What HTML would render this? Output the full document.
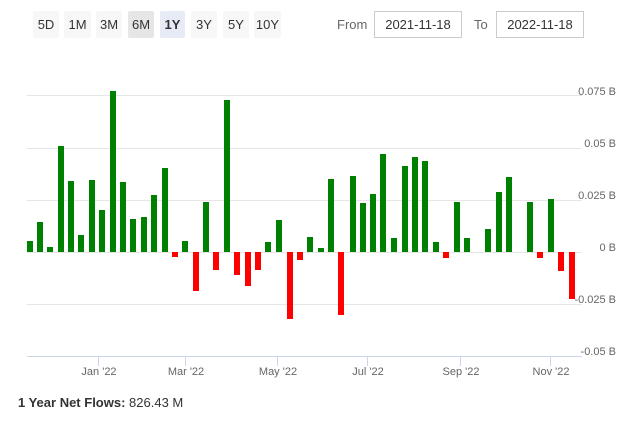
<!DOCTYPE html>
<html><head><style>
body{margin:0;width:640px;height:428px;background:#fff;font-family:"Liberation Sans",sans-serif;position:relative;overflow:hidden}
.b{position:absolute;top:11px;height:27px;background:#f7f7f7;color:#333;font-size:13px;line-height:27px;text-align:center;border-radius:2px}
.t{position:absolute;top:11px;font-size:13px;color:#666;line-height:27px}
.i{position:absolute;top:11px;height:25px;border:1px solid #ccc;font-size:13px;color:#333;line-height:25px;text-align:center}
.ft{position:absolute;left:18px;top:395px;font-size:13px;color:#333}
</style></head><body>
<div class="b" style="left:33px;width:26px">5D</div>
<div class="b" style="left:64px;width:27px">1M</div>
<div class="b" style="left:96px;width:26px">3M</div>
<div class="b" style="left:128px;width:26px;background:#e6e6e6">6M</div>
<div class="b" style="left:160px;width:25px;background:#e6ebf5;font-weight:bold">1Y</div>
<div class="b" style="left:191px;width:26px">3Y</div>
<div class="b" style="left:223px;width:26px">5Y</div>
<div class="b" style="left:254px;width:27px">10Y</div>
<div class="t" style="left:337px">From</div>
<div class="i" style="left:374px;width:86px">2021-11-18</div>
<div class="t" style="left:474px">To</div>
<div class="i" style="left:496px;width:86px">2022-11-18</div>
<svg width="640" height="428" style="position:absolute;left:0;top:0" font-family="Liberation Sans,sans-serif" font-size="11" fill="#666">
<g stroke="#e6e6e6" stroke-width="1">
<line x1="27" x2="582" y1="95.5" y2="95.5"/><line x1="27" x2="582" y1="148.5" y2="148.5"/><line x1="27" x2="582" y1="200.5" y2="200.5"/><line x1="27" x2="582" y1="252.5" y2="252.5"/><line x1="27" x2="582" y1="304.5" y2="304.5"/>
</g>
<line x1="27" x2="582" y1="356.5" y2="356.5" stroke="#ccd6eb"/>
<g stroke="#ccd6eb"><line x1="98.5" x2="98.5" y1="356" y2="366"/><line x1="185.5" x2="185.5" y1="356" y2="366"/><line x1="277.5" x2="277.5" y1="356" y2="366"/><line x1="367.5" x2="367.5" y1="356" y2="366"/><line x1="460.5" x2="460.5" y1="356" y2="366"/><line x1="550.5" x2="550.5" y1="356" y2="366"/></g>
<g text-anchor="end"><text x="616" y="95">0.075 B</text><text x="616" y="147">0.05 B</text><text x="616" y="199">0.025 B</text><text x="616" y="251">0 B</text><text x="616" y="303">-0.025 B</text><text x="616" y="355">-0.05 B</text></g>
<g text-anchor="middle"><text x="99" y="375">Jan '22</text><text x="186" y="375">Mar '22</text><text x="278" y="375">May '22</text><text x="368" y="375">Jul '22</text><text x="461" y="375">Sep '22</text><text x="551" y="375">Nov '22</text></g>
<g fill="#008000">
<rect x="27" y="241" width="6" height="11"/><rect x="37" y="222" width="6" height="30"/><rect x="47" y="247" width="6" height="5"/><rect x="58" y="146" width="6" height="106"/><rect x="68" y="181" width="6" height="71"/><rect x="78" y="235" width="6" height="17"/><rect x="89" y="180" width="6" height="72"/><rect x="99" y="210" width="6" height="42"/><rect x="110" y="91" width="6" height="161"/><rect x="120" y="182" width="6" height="70"/><rect x="130" y="219" width="6" height="33"/><rect x="141" y="217" width="6" height="35"/><rect x="151" y="195" width="6" height="57"/><rect x="162" y="168" width="6" height="84"/><rect x="182" y="241" width="6" height="11"/><rect x="203" y="202" width="6" height="50"/><rect x="224" y="100" width="6" height="152"/><rect x="265" y="242" width="6" height="10"/><rect x="276" y="220" width="6" height="32"/><rect x="307" y="237" width="6" height="15"/><rect x="318" y="248" width="6" height="4"/><rect x="328" y="179" width="6" height="73"/><rect x="350" y="176" width="6" height="76"/><rect x="360" y="203" width="6" height="49"/><rect x="370" y="194" width="6" height="58"/><rect x="380" y="154" width="6" height="98"/><rect x="391" y="238" width="6" height="14"/><rect x="402" y="166" width="6" height="86"/><rect x="412" y="157" width="6" height="95"/><rect x="422" y="161" width="6" height="91"/><rect x="433" y="242" width="6" height="10"/><rect x="454" y="202" width="6" height="50"/><rect x="464" y="238" width="6" height="14"/><rect x="485" y="229" width="6" height="23"/><rect x="496" y="192" width="6" height="60"/><rect x="506" y="177" width="6" height="75"/><rect x="527" y="202" width="6" height="50"/><rect x="548" y="199" width="6" height="53"/>
</g>
<g fill="#ff0000">
<rect x="172" y="252" width="6" height="5"/><rect x="193" y="252" width="6" height="39"/><rect x="213" y="252" width="6" height="18"/><rect x="234" y="252" width="6" height="23"/><rect x="245" y="252" width="6" height="34"/><rect x="255" y="252" width="6" height="18"/><rect x="287" y="252" width="6" height="67"/><rect x="297" y="252" width="6" height="8"/><rect x="338" y="252" width="6" height="63"/><rect x="443" y="252" width="6" height="6"/><rect x="537" y="252" width="6" height="6"/><rect x="558" y="252" width="6" height="19"/><rect x="569" y="252" width="6" height="47"/>
</g>
</svg>
<div class="ft"><b>1 Year Net Flows:</b> 826.43 M</div>
</body></html>
